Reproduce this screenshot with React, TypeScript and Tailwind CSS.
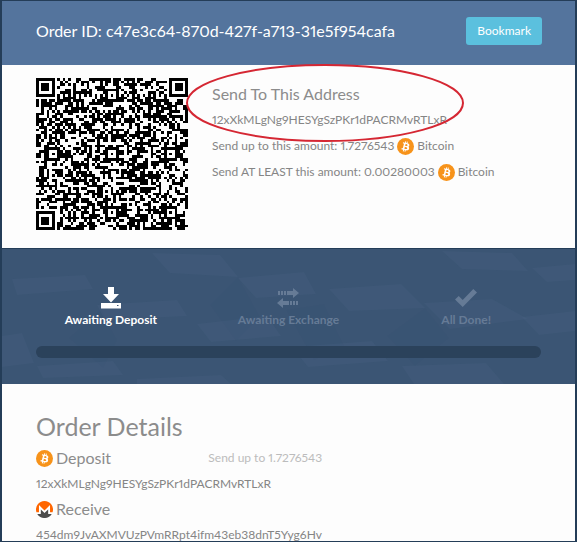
import { useMemo } from "react";

const ADDRESS = "12xXkMLgNg9HESYgSzPKr1dPACRMvRTLxR";
const QR_SIZE = 57;

// distance from the centre of a square marker
const ring = (x: number, y: number, cx: number, cy: number) =>
  Math.max(Math.abs(x - cx), Math.abs(y - cy));

function buildQrPath() {
  const last = QR_SIZE - 4;
  const finders = [[3, 3], [last, 3], [3, last]];
  const alignments = [[28, 6], [6, 28], [28, 28], [50, 28], [28, 50], [50, 50]];
  let seed = 48271;
  let path = "";

  for (let y = 0; y < QR_SIZE; y++) {
    for (let x = 0; x < QR_SIZE; x++) {
      seed = (seed * 16807) % 2147483647;
      let dark = seed / 2147483647 < 0.53;

      if (y === 6 || x === 6) dark = (x + y) % 2 === 0;
      for (const [cx, cy] of alignments) {
        const d = ring(x, y, cx, cy);
        if (d <= 2) dark = d !== 1;
      }
      for (const [cx, cy] of finders) {
        const d = ring(x, y, cx, cy);
        if (d <= 4) dark = d === 3 || d <= 1;
      }
      if (dark) path += `M${x} ${y}h1v1h-1z`;
    }
  }
  return path;
}

function QrCode() {
  const path = useMemo(buildQrPath, []);
  return (
    <svg
      viewBox={`0 0 ${QR_SIZE} ${QR_SIZE}`}
      className="size-[152px] shrink-0"
      shapeRendering="crispEdges"
      role="img"
      aria-label="Deposit address QR code"
    >
      <path d={path} fill="#000" />
    </svg>
  );
}

function BitcoinIcon() {
  return (
    <svg viewBox="0 0 32 32" className="size-[17px] shrink-0" aria-hidden="true">
      <circle cx="16" cy="16" r="16" fill="#f7931a" />
      <path
        fill="#fff"
        d="M23.19 14.02c.31-2.1-1.28-3.22-3.46-3.97l.71-2.84-1.73-.43-.69 2.76-1.38-.33.69-2.78-1.72-.43-.71 2.84-3.49-.87-.46 1.85s1.28.3 1.26.31c.7.18.82.64.8 1.01l-1.94 7.8c-.09.21-.3.53-.79.41.02.03-1.26-.31-1.26-.31l-.86 1.98 3.45.87-.72 2.87 1.73.43.71-2.84 1.38.36-.71 2.82 1.73.43.72-2.87c2.95.56 5.17.33 6.1-2.33.75-2.15-.04-3.39-1.59-4.2 1.13-.26 1.98-1 2.2-2.54zm-3.95 5.54c-.54 2.15-4.15.99-5.32.69l.95-3.8c1.17.29 4.93.87 4.37 3.11zm.53-5.57c-.49 1.95-3.49.96-4.47.72l.86-3.45c.98.24 4.12.7 3.61 2.73z"
      />
    </svg>
  );
}

function MoneroIcon() {
  return (
    <svg viewBox="0 0 32 32" className="size-[17px] shrink-0" aria-hidden="true">
      <circle cx="16" cy="16" r="16" fill="#fff" />
      <path fill="#f60" d="M16 0a16 16 0 0 0-15.2 21H5.6V7.5L16 18 26.4 7.5V21h4.8A16 16 0 0 0 16 0z" />
      <path fill="#4c4c4c" d="m13.6 20.3-4.5-4.5v8.5H2.3a16 16 0 0 0 27.4 0h-6.8v-8.5l-4.5 4.5L16 22.7z" />
    </svg>
  );
}

function DepositIcon() {
  return (
    <svg viewBox="0 0 20 22" className="h-[22px] w-5" fill="currentColor" aria-hidden="true">
      <path d="M7 0h6v7h5l-8 8.5L2 7h5z" />
      <path fillRule="evenodd" d="M0 16h20v5.5H0zM16 18v1h1.5v-1z" />
    </svg>
  );
}

function ExchangeIcon() {
  return (
    <svg viewBox="0 0 22 20" className="h-5 w-[22px]" fill="currentColor" aria-hidden="true">
      <path d="M1 3h2v4H1zM4 3h2v4H4zM7 3h2v4H7zM10 3h6V0l6 5-6 5V7h-6z" />
      <path d="M21 13h-2v4h2zM18 13h-2v4h2zM15 13h-2v4h2zM12 13H6v-3l-6 5 6 5v-3h6z" />
    </svg>
  );
}

function DoneIcon() {
  return (
    <svg viewBox="0 0 22 18" className="h-[18px] w-[22px]" fill="currentColor" aria-hidden="true">
      <path d="M0 10.5 3.7 7l4 4L18.3 0 22 3.5 7.7 18z" />
    </svg>
  );
}

const steps = [
  { label: "Awaiting Deposit", icon: <DepositIcon />, active: true },
  { label: "Awaiting Exchange", icon: <ExchangeIcon />, active: false },
  { label: "All Done!", icon: <DoneIcon />, active: false },
];

function StepsBackdrop() {
  return (
    <svg
      viewBox="0 0 573 135"
      preserveAspectRatio="none"
      className="absolute inset-0 size-full"
      aria-hidden="true"
    >
      <g fill="#8197bd" fillOpacity="0.05">
        <path d="M10 30l73-4 8 14-76 6zM150 4l68 2 18 22-68-4zM95 56l80-5 10 16-82 4z" />
        <path d="M236 29l66-6 12 22-60 4zM327 40l72-5 24 24-76 3zM422 54l68-4 36 20-78 10zM195 75l70-8 14 20-70 6z" />
        <path d="M290 98l80-6 16 20-80 6zM400 117l84-3 18 21h-90zM530 19l43-4v16l-28 2zM520 68l53-6v20l-36 4z" />
        <path d="M0 87l20-3 12 30-32 4zM35 117l76-5 10 14-80 3zM135 130l84-4 10 9h-94zM440 2l70 2 16 18-66-2z" />
      </g>
      <g fill="#172d50" fillOpacity="0.02">
        <path d="M99 60l16 31-14 28-34-30zM322 55l20 42-30 14-28-50zM423 59l24 30-34 28-28-30zM236 28l22 40-24 24-26-36z" />
      </g>
    </svg>
  );
}

export default function App() {
  return (
    <div className="flex h-screen flex-col overflow-hidden border border-x-2 border-[#243d58] bg-[#fdfdfd] font-['Lato','Open_Sans',sans-serif] text-xs leading-5 text-[#858585] proportional-nums">
      <header className="flex h-16 shrink-0 items-center justify-between bg-[#54749d] pr-[33px] pb-1 pl-[34px]">
        <h1 className="text-base whitespace-nowrap text-white">
          Order ID: c47e3c64-870d-427f-a713-31e5f954cafa
        </h1>
        <button
          type="button"
          className="h-7 shrink-0 rounded-[3px] bg-[#5bc0de] px-[11px] text-xs text-white"
        >
          Bookmark
        </button>
      </header>

      <section className="flex shrink-0 gap-6 px-[34px] pt-[13px] pb-[18px]">
        <QrCode />
        <div className="relative min-w-0 pt-1">
          <h2 className="text-base leading-6 text-[#8c8c8c]">Send To This Address</h2>
          <p className="mt-1">{ADDRESS}</p>
          <p className="mt-[6px] flex items-center gap-[3px]">
            Send up to this amount: 1.7276543 <BitcoinIcon /> Bitcoin
          </p>
          <p className="mt-[6px] flex items-center gap-[3px]">
            Send AT LEAST this amount: 0.00280003 <BitcoinIcon /> Bitcoin
          </p>
          <svg
            viewBox="0 0 278 80"
            className="pointer-events-none absolute -top-[15px] -left-[26px] h-20 w-[278px]"
            aria-hidden="true"
          >
            <ellipse cx="139" cy="40" rx="138" ry="38" fill="none" stroke="#d52733" strokeWidth="2" />
          </svg>
        </div>
      </section>

      <section className="relative shrink-0 border-t border-[#243d58] bg-[#3b5574] pt-[37px] pb-[26px]">
        <StepsBackdrop />
        <ol className="relative grid grid-cols-3 px-5">
          {steps.map((step) => (
            <li
              key={step.label}
              className={`flex flex-col items-center font-bold ${step.active ? "text-white" : "text-[#667b96]"}`}
            >
              <span className="flex h-6 items-center">{step.icon}</span>
              {step.label}
            </li>
          ))}
        </ol>
        <div
          role="progressbar"
          aria-label="Order progress"
          aria-valuenow={0}
          aria-valuemin={0}
          aria-valuemax={100}
          className="relative mx-[34px] mt-4 h-3 rounded-full bg-[#2b425b]"
        />
      </section>

      <section className="px-[34px] pt-[26px]">
        <h2 className="text-[25px] leading-8 text-[#8c8c8c]">Order Details</h2>
        <div className="mt-1 grid grid-cols-3 items-center gap-3">
          <h3 className="flex items-center gap-[3px] text-base leading-6 text-[#8c8c8c]">
            <BitcoinIcon /> Deposit
          </h3>
          <span className="text-[#bcbcbc]">Send up to 1.7276543</span>
        </div>
        <p className="mt-1">{ADDRESS}</p>
        <h3 className="mt-[3px] flex items-center gap-[3px] text-base leading-6 text-[#8c8c8c]">
          <MoneroIcon /> Receive
        </h3>
        <p className="mt-1">454dm9JvAXMVUzPVmRRpt4ifm43eb38dnT5Yyg6Hv</p>
      </section>
    </div>
  );
}
